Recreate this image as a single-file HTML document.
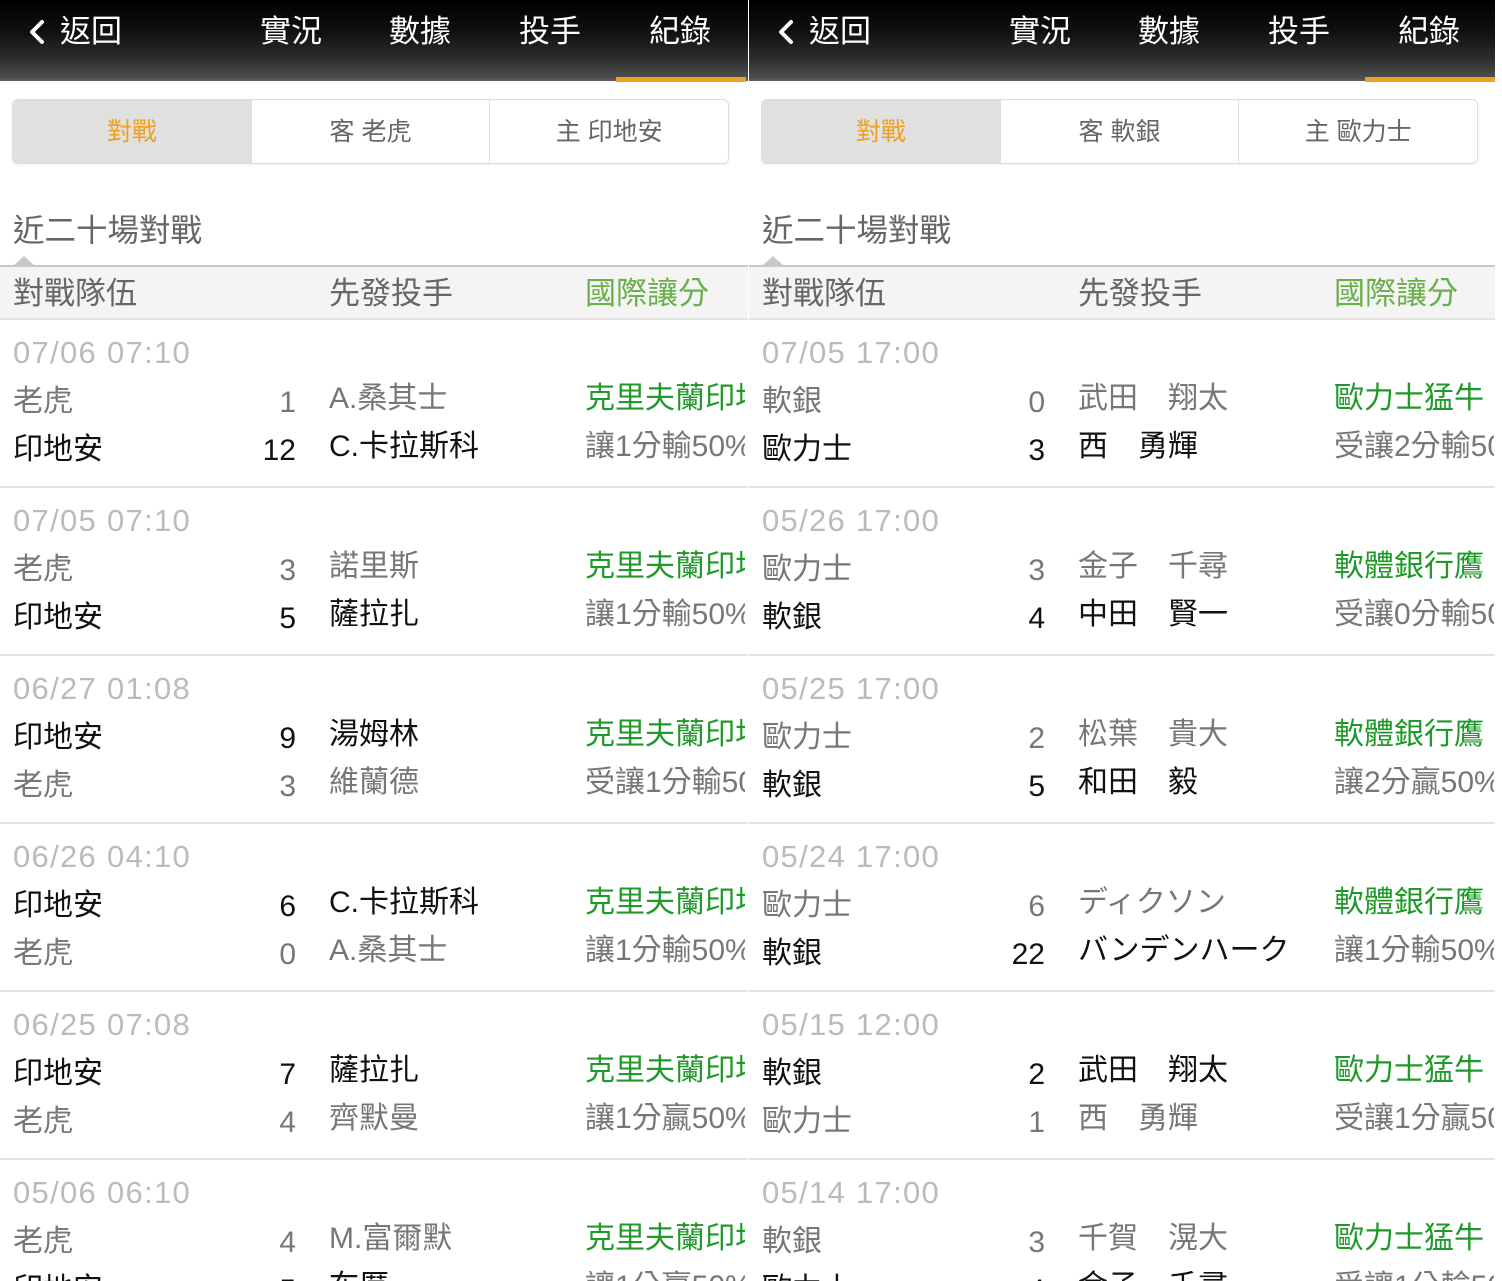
<!DOCTYPE html>
<html><head><meta charset="utf-8"><style>
*{margin:0;padding:0;box-sizing:border-box}
body{width:1502px;height:1281px;background:#fff;overflow:hidden;font-family:"Liberation Sans","Noto Sans CJK TC",sans-serif;position:relative}
.p{position:absolute;top:0;width:748px;height:1281px;overflow:hidden}
.hd{position:absolute;left:0;top:0;width:748px;height:81px;background:linear-gradient(#000 0%,#101010 40%,#2e2e2e 75%,#505050 100%);border-bottom:2px solid #5a5a5a}
.hd span{position:absolute;top:12px;color:#fff;font-size:31px;line-height:40px}
.hd svg{position:absolute;left:27px;top:19px}
.ul{position:absolute;left:616px;top:77px;width:130px;height:5px;background:#f0a020}
.seg{position:absolute;left:12px;top:99px;width:717px;height:65px;border:1px solid #ddd;border-radius:6px;overflow:hidden;display:flex;box-shadow:0 1px 2px #eee}
.seg div{flex:1;text-align:center;line-height:65px;font-size:25px;color:#666;border-left:1px solid #ddd}
.seg div:first-child{background:#e0e0e0;color:#f0a020;border-left:none}
.tt{position:absolute;left:13px;top:210px;font-size:31.5px;color:#666;line-height:40px}
.tri{position:absolute;left:14px;top:256px;width:0;height:0;border-left:10px solid transparent;border-right:10px solid transparent;border-bottom:9px solid #c8c8c8}
.th{position:absolute;left:0;top:265px;width:748px;height:55px;background:#f4f4f4;border-top:2px solid #c8c8c8;border-bottom:2px solid #e4e4e4}
.th span{position:absolute;top:7px;font-size:31px;color:#666;line-height:40px}
.r{position:absolute;left:0;width:748px;height:168px;border-bottom:2px solid #e2e2e2}
.r span{position:absolute;font-size:30px;line-height:36px;white-space:nowrap}
.r span.d{left:13px;top:15px;color:#bbb;font-size:31px;letter-spacing:1.3px}
.a{left:13px;top:64px}.b{left:13px;top:112px}
.sa{right:452px;top:65px}.sb{right:452px;top:113px}
.pa{left:329px;top:61px}.pb{left:329px;top:109px}
.g{left:585px;top:61px;color:#1f9a2a;width:160px;overflow:hidden}
.h{left:585px;top:109px;color:#777;width:160px;overflow:hidden}
.k{color:#111}.y{color:#777}
</style></head><body>

<div class="p" style="left:0">
<div class="hd"><svg width="20" height="26" viewBox="0 0 20 26"><polyline points="15,3 5,13 15,23" fill="none" stroke="#fff" stroke-width="4" stroke-linecap="round" stroke-linejoin="round"/></svg><span style="left:60px">返回</span><span style="left:260px">實況</span><span style="left:389px">數據</span><span style="left:519px">投手</span><span style="left:649px">紀錄</span><div class="ul"></div></div>
<div class="seg"><div>對戰</div><div>客 老虎</div><div>主 印地安</div></div>
<div class="tt">近二十場對戰</div>
<div class="th"><span style="left:13px">對戰隊伍</span><span style="left:329px">先發投手</span><span style="left:585px;color:#6ab04a">國際讓分</span></div><div class="tri"></div>
<div class="r" style="top:320px"><span class="d">07/06 07:10</span><span class="a y">老虎</span><span class="sa y">1</span><span class="pa y">A.桑其士</span><span class="b k">印地安</span><span class="sb k">12</span><span class="pb k">C.卡拉斯科</span><span class="g">克里夫蘭印地安人</span><span class="h">讓1分輸50%</span></div>
<div class="r" style="top:488px"><span class="d">07/05 07:10</span><span class="a y">老虎</span><span class="sa y">3</span><span class="pa y">諾里斯</span><span class="b k">印地安</span><span class="sb k">5</span><span class="pb k">薩拉扎</span><span class="g">克里夫蘭印地安人</span><span class="h">讓1分輸50%</span></div>
<div class="r" style="top:656px"><span class="d">06/27 01:08</span><span class="a k">印地安</span><span class="sa k">9</span><span class="pa k">湯姆林</span><span class="b y">老虎</span><span class="sb y">3</span><span class="pb y">維蘭德</span><span class="g">克里夫蘭印地安人</span><span class="h">受讓1分輸50%</span></div>
<div class="r" style="top:824px"><span class="d">06/26 04:10</span><span class="a k">印地安</span><span class="sa k">6</span><span class="pa k">C.卡拉斯科</span><span class="b y">老虎</span><span class="sb y">0</span><span class="pb y">A.桑其士</span><span class="g">克里夫蘭印地安人</span><span class="h">讓1分輸50%</span></div>
<div class="r" style="top:992px"><span class="d">06/25 07:08</span><span class="a k">印地安</span><span class="sa k">7</span><span class="pa k">薩拉扎</span><span class="b y">老虎</span><span class="sb y">4</span><span class="pb y">齊默曼</span><span class="g">克里夫蘭印地安人</span><span class="h">讓1分贏50%</span></div>
<div class="r" style="top:1160px"><span class="d">05/06 06:10</span><span class="a y">老虎</span><span class="sa y">4</span><span class="pa y">M.富爾默</span><span class="b k">印地安</span><span class="sb k">5</span><span class="pb k">布厲</span><span class="g">克里夫蘭印地安人</span><span class="h">讓1分贏50%</span></div>
</div>

<div class="p" style="left:749px;width:746px">
<div class="hd"><svg width="20" height="26" viewBox="0 0 20 26"><polyline points="15,3 5,13 15,23" fill="none" stroke="#fff" stroke-width="4" stroke-linecap="round" stroke-linejoin="round"/></svg><span style="left:60px">返回</span><span style="left:260px">實況</span><span style="left:389px">數據</span><span style="left:519px">投手</span><span style="left:649px">紀錄</span><div class="ul"></div></div>
<div class="seg"><div>對戰</div><div>客 軟銀</div><div>主 歐力士</div></div>
<div class="tt">近二十場對戰</div>
<div class="th"><span style="left:13px">對戰隊伍</span><span style="left:329px">先發投手</span><span style="left:585px;color:#6ab04a">國際讓分</span></div><div class="tri"></div>
<div class="r" style="top:320px"><span class="d">07/05 17:00</span><span class="a y">軟銀</span><span class="sa y">0</span><span class="pa y">武田　翔太</span><span class="b k">歐力士</span><span class="sb k">3</span><span class="pb k">西　勇輝</span><span class="g">歐力士猛牛</span><span class="h">受讓2分輸50%</span></div>
<div class="r" style="top:488px"><span class="d">05/26 17:00</span><span class="a y">歐力士</span><span class="sa y">3</span><span class="pa y">金子　千尋</span><span class="b k">軟銀</span><span class="sb k">4</span><span class="pb k">中田　賢一</span><span class="g">軟體銀行鷹</span><span class="h">受讓0分輸50%</span></div>
<div class="r" style="top:656px"><span class="d">05/25 17:00</span><span class="a y">歐力士</span><span class="sa y">2</span><span class="pa y">松葉　貴大</span><span class="b k">軟銀</span><span class="sb k">5</span><span class="pb k">和田　毅</span><span class="g">軟體銀行鷹</span><span class="h">讓2分贏50%</span></div>
<div class="r" style="top:824px"><span class="d">05/24 17:00</span><span class="a y">歐力士</span><span class="sa y">6</span><span class="pa y">ディクソン</span><span class="b k">軟銀</span><span class="sb k">22</span><span class="pb k">バンデンハーク</span><span class="g">軟體銀行鷹</span><span class="h">讓1分輸50%</span></div>
<div class="r" style="top:992px"><span class="d">05/15 12:00</span><span class="a k">軟銀</span><span class="sa k">2</span><span class="pa k">武田　翔太</span><span class="b y">歐力士</span><span class="sb y">1</span><span class="pb y">西　勇輝</span><span class="g">歐力士猛牛</span><span class="h">受讓1分贏50%</span></div>
<div class="r" style="top:1160px"><span class="d">05/14 17:00</span><span class="a y">軟銀</span><span class="sa y">3</span><span class="pa y">千賀　滉大</span><span class="b k">歐力士</span><span class="sb k">4</span><span class="pb k">金子　千尋</span><span class="g">歐力士猛牛</span><span class="h">受讓1分輸50%</span></div>
</div>
</body></html>
